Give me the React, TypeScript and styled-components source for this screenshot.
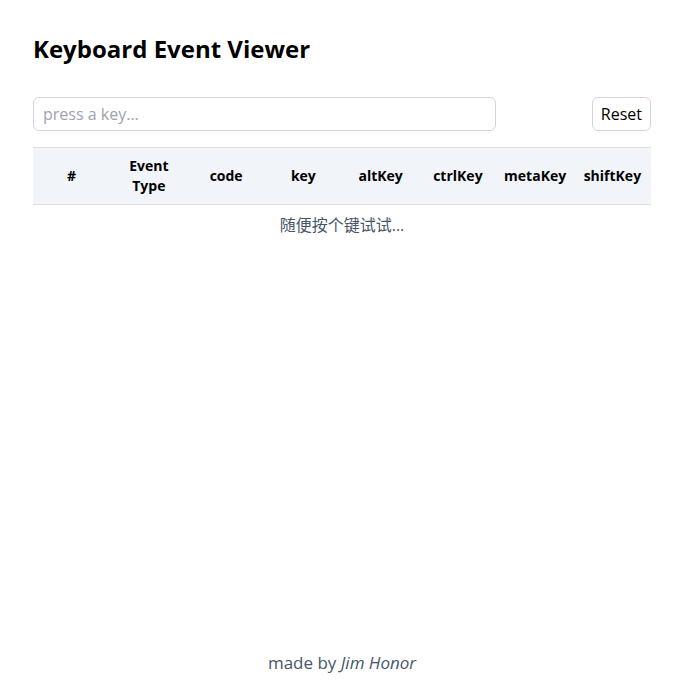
import styled, { createGlobalStyle } from 'styled-components';

const COLUMNS = ['#', 'Event Type', 'code', 'key', 'altKey', 'ctrlKey', 'metaKey', 'shiftKey'];

const GlobalStyle = createGlobalStyle`
    * {
        box-sizing: border-box;
    }

    body {
        margin: 0;
        font-family: 'Open Sans', 'Noto Sans', 'Noto Sans CJK SC', sans-serif;
        color: #000;
        background: #fff;
    }
`;

export default function App() {
    return (
        <>
            <GlobalStyle />
            <Page>
                <Main>
                    <Title>Keyboard Event Viewer</Title>
                    <Toolbar>
                        <KeyInput placeholder="press a key..." />
                        <ResetButton>Reset</ResetButton>
                    </Toolbar>
                    <Table>
                        <thead>
                            <tr>
                                {COLUMNS.map((col) => (
                                    <HeadCell key={col}>{col}</HeadCell>
                                ))}
                            </tr>
                        </thead>
                        <tbody>
                            <tr>
                                <EmptyCell colSpan={COLUMNS.length}>随便按个键试试...</EmptyCell>
                            </tr>
                        </tbody>
                    </Table>
                </Main>
                <Footer>
                    made by <em>Jim Honor</em>
                </Footer>
            </Page>
        </>
    );
}

const Page = styled.div`
    display: flex;
    flex-direction: column;
    min-height: 100vh;
    padding: 0 31px 0 33px;
`;

const Main = styled.main`
    flex: 1;
    display: flex;
    flex-direction: column;
`;

const Title = styled.h1`
    margin: 33px 0 32px;
    font-size: 24px;
    font-weight: 700;
    line-height: 32px;
`;

const Toolbar = styled.div`
    display: flex;
    justify-content: space-between;
    align-items: center;
    margin-bottom: 16px;
`;

const KeyInput = styled.input`
    width: 463px;
    height: 34px;
    padding: 0 9px;
    border: 1px solid #d1d5db;
    border-radius: 6px;
    font-family: inherit;
    font-size: 16px;
    color: #111827;
    outline: none;

    &::placeholder {
        color: #9ca3af;
    }
`;

const ResetButton = styled.button`
    height: 34px;
    padding: 0 8px;
    border: 1px solid #d1d5db;
    border-radius: 6px;
    background: #fff;
    font-family: inherit;
    font-size: 16px;
    color: #000;
    cursor: pointer;
`;

const Table = styled.table`
    width: 100%;
    border-collapse: collapse;
    table-layout: fixed;
`;

const HeadCell = styled.th`
    height: 57px;
    padding: 0 6px;
    background: #f1f4f9;
    border-top: 1px solid #dcdfe4;
    border-bottom: 1px solid #dcdfe4;
    font-size: 14px;
    font-weight: 700;
    line-height: 20px;
    text-align: center;
`;

const EmptyCell = styled.td`
    padding: 8px 0;
    font-size: 16px;
    line-height: 24px;
    color: #475569;
    text-align: center;
`;

const Footer = styled.footer`
    padding: 9px 0 6px;
    font-size: 17px;
    line-height: 26px;
    color: #475569;
    text-align: center;
`;
